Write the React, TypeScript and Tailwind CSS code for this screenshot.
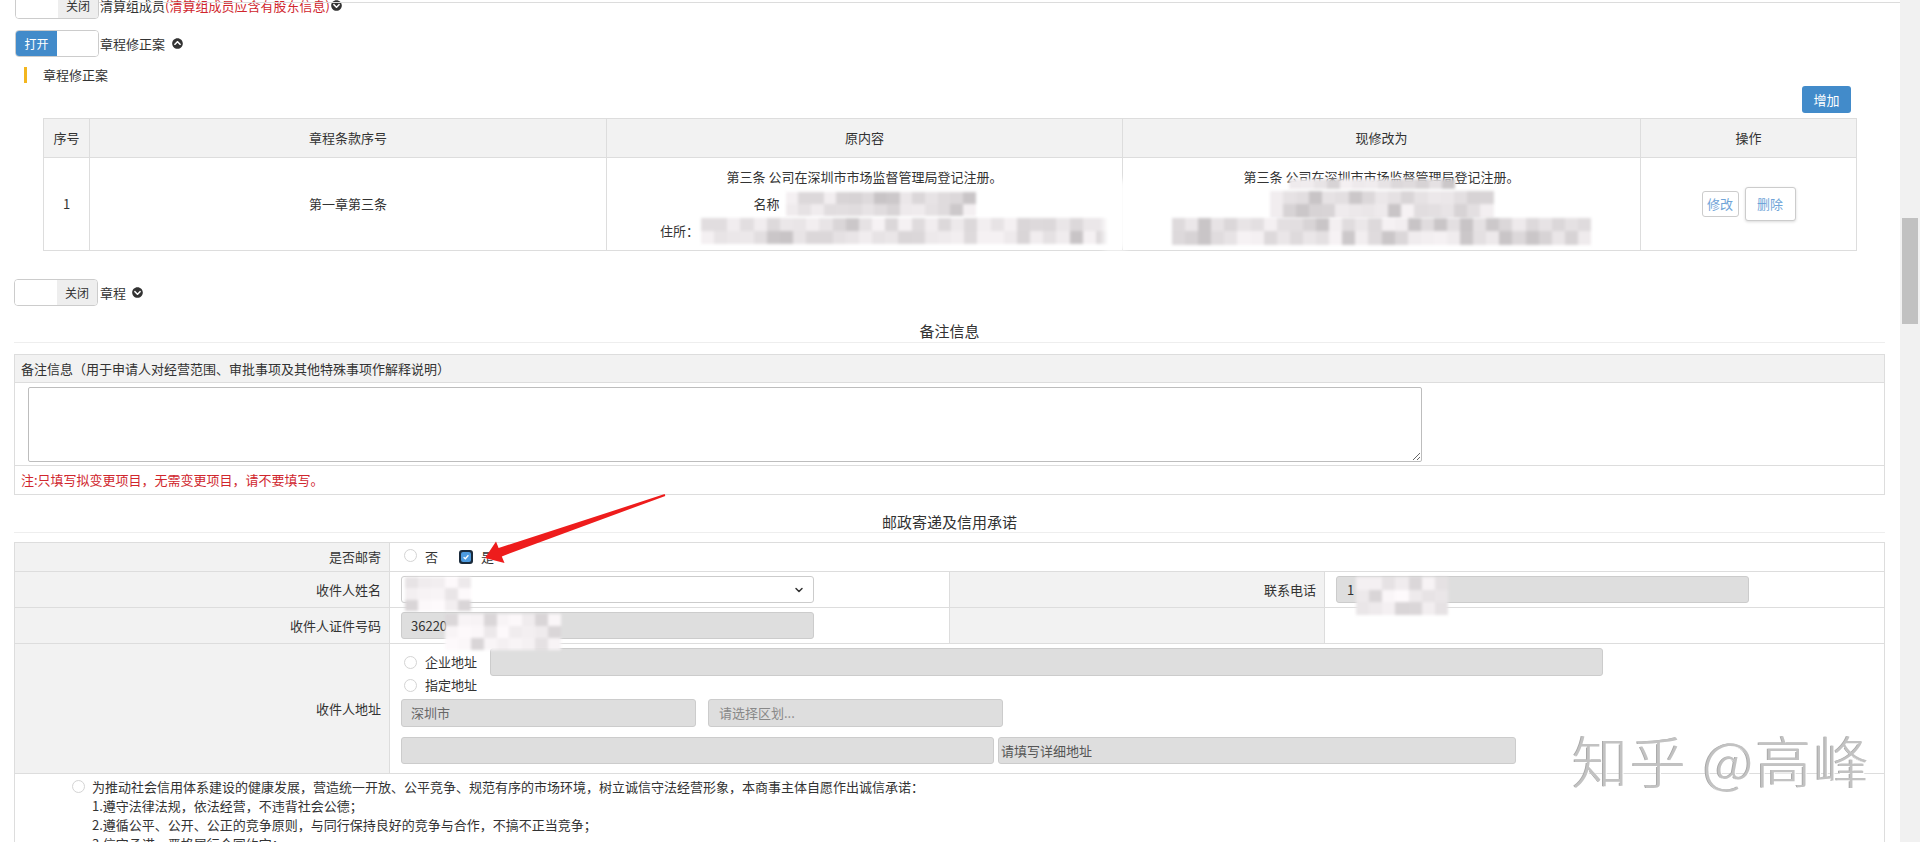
import React from "react";
import { FaChevronCircleUp, FaChevronCircleDown } from "react-icons/fa";
import { ChevronDown } from "lucide-react";

function Mosaic({
  w,
  h,
  seed = 1,
  light = false,
  className = "",
}: {
  w: number;
  h: number;
  seed?: number;
  light?: boolean;
  className?: string;
}) {
  const cols = Math.max(1, Math.round(w / 13));
  const rows = Math.max(1, Math.round(h / 13));
  const tiles: string[] = [];
  let s = seed * 7919 + 13;
  for (let i = 0; i < cols * rows; i++) {
    s = (s * 9301 + 49297) % 233280;
    const r = s / 233280;
    const base = light ? 222 : 206;
    const v = Math.round(base + r * (light ? 28 : 36));
    const warm = r < 0.12 ? 10 : 0;
    tiles.push(`rgb(${v - warm + 4},${v - warm},${v - warm + 2})`);
  }
  return (
    <span
      className={`inline-grid shrink-0 blur-[1.5px] ${className}`}
      style={{
        width: w,
        height: h,
        gridTemplateColumns: `repeat(${cols}, 1fr)`,
        gridTemplateRows: `repeat(${rows}, 1fr)`,
      }}
    >
      {tiles.map((c, i) => (
        <span key={i} style={{ background: c }} />
      ))}
    </span>
  );
}

function Toggle({ on }: { on: boolean }) {
  return (
    <div className="flex h-[27px] w-[84px] shrink-0 overflow-hidden rounded-[4px] border border-[#ccc] text-[12px]">
      {on ? (
        <>
          <div className="flex w-[41px] items-center justify-center bg-[#428bca] text-white">打开</div>
          <div className="flex-1 bg-white" />
        </>
      ) : (
        <>
          <div className="w-[42px] bg-white" />
          <div className="flex flex-1 items-center justify-center bg-[#eeeeee] text-[#333]">关闭</div>
        </>
      )}
    </div>
  );
}

function Radio() {
  return <span className="inline-block h-[13px] w-[13px] shrink-0 rounded-full border border-[#d4d4d4] bg-white" />;
}

function CheckBox() {
  return (
    <span className="flex h-[14px] w-[14px] shrink-0 items-center justify-center rounded-[3px] bg-[#1b2b3c] p-[2px]">
      <span className="flex h-full w-full items-center justify-center rounded-[2px] bg-[#4d9be0]">
        <svg viewBox="0 0 10 10" className="h-[8px] w-[8px]">
          <path d="M2 5.2 L4.2 7.2 L8 2.8" fill="none" stroke="#fff" strokeWidth="1.6" />
        </svg>
      </span>
    </span>
  );
}

const labelCell = "flex items-center justify-end border-b border-r border-[#ddd] bg-[#f2f2f2] pr-[8px]";
const valueCell = "flex items-center border-b border-r border-[#ddd] bg-white pl-[11px]";
const greyInput = "flex items-center rounded-[3px] border border-[#ccc] bg-[#dedede]";

export default function App() {
  return (
    <div className="relative flex h-[842px] w-[1920px] overflow-hidden bg-white font-['Noto_Sans_CJK_SC','Noto_Sans',sans-serif] text-[13px] text-[#333]">
      <main className="relative w-[1900px] shrink-0">
        <div className="absolute left-[99px] right-0 top-[2px] h-px bg-[#dcdcdc]" />

        {/* Row A */}
        <div className="mt-[-8px] flex h-[27px] items-center pl-[15px]">
          <Toggle on={false} />
          <span className="ml-[1px]">清算组成员</span>
          <span className="text-[#d0262d]">(清算组成员应含有股东信息)</span>
          <FaChevronCircleDown className="ml-[1px] h-[11px] w-[11px] text-[#333]" />
        </div>

        {/* Row B */}
        <div className="mt-[11px] flex h-[27px] items-center pl-[15px]">
          <Toggle on />
          <span className="ml-[1px]">章程修正案</span>
          <FaChevronCircleUp className="ml-[7px] h-[11px] w-[11px] text-[#333]" />
        </div>

        {/* heading */}
        <div className="mt-[10px] flex h-[16px] items-center pl-[24px]">
          <span className="h-[16px] w-[3px] bg-[#f3b61f]" />
          <span className="ml-[16px]">章程修正案</span>
        </div>

        <div className="mt-[3px] flex justify-end pr-[49px]">
          <button className="h-[27px] w-[49px] rounded-[3px] bg-[#428bca] text-[13px] text-white">增加</button>
        </div>

        {/* amendment table */}
        <div className="mx-[43px] mt-[5px] border border-[#ddd]">
          <div className="grid h-[39px] grid-cols-[46px_517px_516px_518px_1fr] border-b border-[#ddd] bg-[#f2f2f2]">
            <div className="flex items-center justify-center border-r border-[#ddd]">序号</div>
            <div className="flex items-center justify-center border-r border-[#ddd]">章程条款序号</div>
            <div className="flex items-center justify-center border-r border-[#ddd]">原内容</div>
            <div className="flex items-center justify-center border-r border-[#ddd]">现修改为</div>
            <div className="flex items-center justify-center">操作</div>
          </div>
          <div className="relative grid h-[92px] grid-cols-[46px_517px_516px_518px_1fr]">
            <div className="flex items-center justify-center border-r border-[#ddd]">1</div>
            <div className="flex items-center justify-center border-r border-[#ddd]">第一章第三条</div>
            <div className="flex flex-col items-center justify-center border-r border-[#ddd]">
              <div className="flex h-[27px] items-center">第三条 公司在深圳市市场监督管理局登记注册。</div>
              <div className="flex h-[27px] items-center">
                <span>名称</span>
                <Mosaic w={190} h={24} seed={3} className="ml-[6px]" />
              </div>
              <div className="flex h-[27px] items-center pl-[40px]">
                <span>住所：</span>
                <Mosaic w={408} h={26} seed={5} className="ml-[2px]" />
              </div>
            </div>
            <div className="flex flex-col items-center justify-center border-r border-[#ddd]">
              <div className="relative flex h-[27px] items-center">
                第三条 公司在深圳市市场监督管理局登记注册。
                <span className="absolute left-[45px] top-[15px] flex">
                  <Mosaic w={166} h={10} seed={11} />
                </span>
              </div>
              <div className="flex h-[27px] items-center">
                <Mosaic w={224} h={27} seed={7} />
              </div>
              <div className="flex h-[27px] items-center">
                <Mosaic w={419} h={27} seed={9} />
              </div>
            </div>
            <div className="flex items-center justify-center">
              <button className="h-[26px] w-[37px] rounded-[3px] border border-[#ccc] bg-white text-[13px] text-[#6fa4d8]">修改</button>
              <button className="ml-[6px] h-[34px] w-[51px] rounded-[3px] border border-[#ccc] bg-white text-[13px] text-[#6fa4d8] shadow-[0_1px_3px_rgba(0,0,0,0.15)]">删除</button>
            </div>
            <div className="absolute left-[1060px] top-[22px] h-[70px] w-[22px] bg-white blur-[3px]" />
          </div>
        </div>

        {/* 章程 toggle */}
        <div className="mt-[28px] flex h-[27px] items-center pl-[14px]">
          <Toggle on={false} />
          <span className="ml-[2px]">章程</span>
          <FaChevronCircleDown className="ml-[6px] h-[11px] w-[11px] text-[#333]" />
        </div>

        {/* 备注信息 */}
        <div className="ml-[14px] mr-[15px] mt-[14px] flex h-[23px] items-center justify-center border-b border-[#eee] text-[15px]">
          备注信息
        </div>
        <div className="ml-[14px] mr-[15px] mt-[11px] border border-[#ddd]">
          <div className="flex h-[28px] items-center border-b border-[#ddd] bg-[#f2f2f2] pl-[6px]">
            备注信息（用于申请人对经营范围、审批事项及其他特殊事项作解释说明）
          </div>
          <div className="h-[83px] border-b border-[#ddd] pl-[13px] pt-[4px]">
            <textarea
              readOnly
              className="block h-[75px] w-[1394px] resize rounded-[2px] border border-[#bdbdbd] bg-white outline-none"
            />
          </div>
          <div className="flex h-[28px] items-center pl-[6px] text-[#d0262d]">注:只填写拟变更项目，无需变更项目，请不要填写。</div>
        </div>

        {/* 邮政寄递及信用承诺 */}
        <div className="ml-[14px] mr-[15px] mt-[17px] flex h-[21px] items-center justify-center border-b border-[#eee] text-[15px]">
          邮政寄递及信用承诺
        </div>
        <div className="ml-[14px] mr-[15px] mt-[9px] grid grid-cols-[375px_560px_375px_1fr] border-l border-t border-[#ddd]">
          {/* row 1 */}
          <div className={`${labelCell} h-[29px]`}>是否邮寄</div>
          <div className={`${valueCell} col-span-3 h-[29px]`}>
            <span className="ml-[3px]">
              <Radio />
            </span>
            <span className="ml-[8px]">否</span>
            <span className="ml-[21px]">
              <CheckBox />
            </span>
            <span className="ml-[8px]">是</span>
          </div>
          {/* row 2 */}
          <div className={`${labelCell} h-[36px]`}>收件人姓名</div>
          <div className={`${valueCell} h-[36px]`}>
            <div className="relative flex h-[27px] w-[413px] items-center justify-end rounded-[3px] border border-[#ccc] bg-white pr-[8px]">
              <ChevronDown className="h-[12px] w-[12px] text-[#333]" strokeWidth={3} />
              <span className="absolute left-[3px] top-[0px] flex">
                <Mosaic w={66} h={34} seed={21} light />
              </span>
            </div>
          </div>
          <div className={`${labelCell} h-[36px]`}>联系电话</div>
          <div className={`${valueCell} h-[36px]`}>
            <div className={`${greyInput} relative h-[27px] w-[413px] pl-[10px]`}>
              <span>1</span>
              <span className="absolute left-[19px] top-[0px] flex">
                <Mosaic w={92} h={38} seed={23} light />
              </span>
            </div>
          </div>
          {/* row 3 */}
          <div className={`${labelCell} h-[36px]`}>收件人证件号码</div>
          <div className={`${valueCell} h-[36px]`}>
            <div className={`${greyInput} relative h-[27px] w-[413px] pl-[9px]`}>
              <span>36220</span>
              <span className="absolute left-[43px] top-[1px] flex">
                <Mosaic w={116} h={36} seed={25} light />
              </span>
            </div>
          </div>
          <div className={`${labelCell} h-[36px]`} />
          <div className={`${valueCell} h-[36px]`} />
          {/* row 4 */}
          <div className={`${labelCell} h-[130px]`}>收件人地址</div>
          <div className="col-span-3 flex h-[130px] flex-col border-b border-r border-[#ddd] pl-[11px] pt-[4px]">
            <div className="flex h-[28px] items-center">
              <span className="ml-[3px] flex">
                <Radio />
              </span>
              <span className="ml-[8px]">企业地址</span>
              <div className={`${greyInput} ml-[13px] h-[28px] w-[1113px]`} />
            </div>
            <div className="flex h-[18px] items-center">
              <span className="ml-[3px] flex">
                <Radio />
              </span>
              <span className="ml-[8px]">指定地址</span>
            </div>
            <div className="mt-[5px] flex h-[28px]">
              <div className={`${greyInput} h-[28px] w-[295px] pl-[9px] text-[#666]`}>深圳市</div>
              <div className={`${greyInput} ml-[12px] h-[28px] w-[295px] pl-[10px] text-[#888]`}>请选择区划...</div>
            </div>
            <div className="mt-[10px] flex h-[27px]">
              <div className={`${greyInput} h-[27px] w-[593px]`} />
              <div className={`${greyInput} ml-[4px] h-[27px] w-[518px] pl-[2px] text-[#555]`}>请填写详细地址</div>
            </div>
          </div>
          {/* row 5 */}
          <div className="col-span-4 flex h-[100px] border-r border-[#ddd] pl-[57px] pt-[3px] leading-[19px]">
            <span className="mt-[3px] flex">
              <Radio />
            </span>
            <div className="ml-[7px]">
              <p>为推动社会信用体系建设的健康发展，营造统一开放、公平竞争、规范有序的市场环境，树立诚信守法经营形象，本商事主体自愿作出诚信承诺：</p>
              <p>1.遵守法律法规，依法经营，不违背社会公德；</p>
              <p>2.遵循公平、公开、公正的竞争原则，与同行保持良好的竞争与合作，不搞不正当竞争；</p>
              <p>3.信守承诺，严格履行合同约定；</p>
            </div>
          </div>
        </div>

        {/* red arrow annotation */}
        <svg className="pointer-events-none absolute left-[470px] top-[485px] h-[80px] w-[205px]" viewBox="0 0 205 80">
          <polygon
            points="15,73 26,56.5 28.6,63 194.7,9.1 195.3,10.9 31.8,71.4 34.5,78"
            fill="#ee1c1c"
          />
        </svg>

        {/* watermark */}
        <div className="pointer-events-none absolute left-[1572px] top-[731px] whitespace-nowrap text-[56px] font-light leading-none tracking-[2px] text-[#c2c2c2] [text-shadow:1px_1px_0_#ffffff,-1px_0_0_#a8a8a8]">
          知乎 @高峰
        </div>
      </main>

      {/* scrollbar */}
      <div className="w-[20px] shrink-0 bg-[#f1f1f1] px-[2px] pt-[218px]">
        <div className="h-[106px] bg-[#c1c1c1]" />
      </div>
    </div>
  );
}
